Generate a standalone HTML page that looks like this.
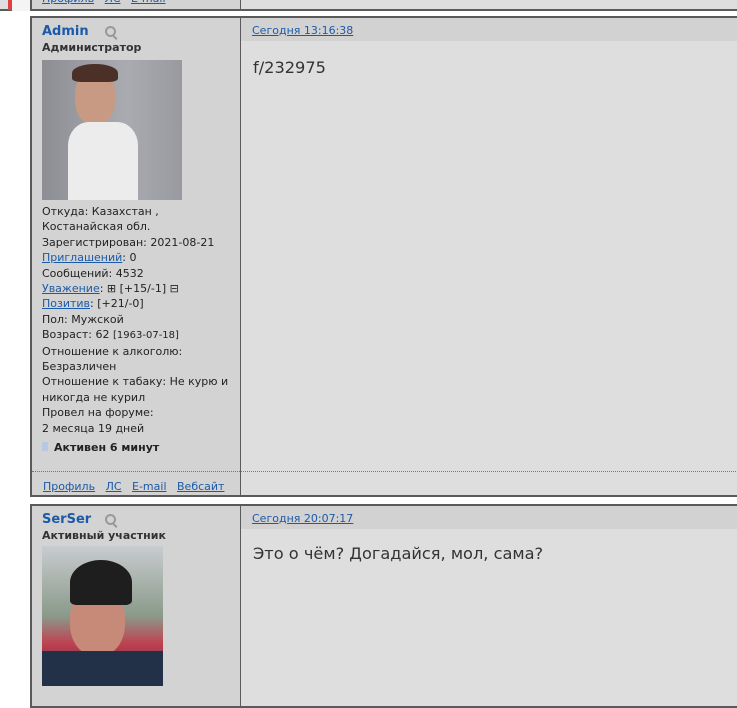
<!DOCTYPE html>
<html><head><meta charset="utf-8"><style>
body{margin:0;background:#fff;width:737px;height:696px;overflow:hidden;position:relative;font-family:"DejaVu Sans","Liberation Sans",sans-serif;font-size:11px;color:#222}
a{color:#1c5aa8;text-decoration:underline}
.post{position:absolute;left:30px;width:720px;border:2px solid #5a5a5a;border-right:none;background:#dedede}
.left{position:absolute;left:0;top:0;width:208px;bottom:0;background:#d3d3d3;border-right:1px solid #5a5a5a}
.hdr{position:absolute;left:209px;right:0;top:0;height:23px;background:#d2d2d2}
.hdr a{position:absolute;left:11px;top:6px;font-size:11px}
.name{position:absolute;left:10px;top:6px;font-weight:bold;font-size:13px;color:#1c5aa8}
.mag{position:absolute;left:73px;top:8px;width:7px;height:7px;border:2px solid #999;border-radius:50%}
.mag:after{content:"";position:absolute;left:7px;top:7px;width:2px;height:5px;background:#999;transform:rotate(-45deg)}
.title{position:absolute;left:10px;top:23px;font-weight:bold;font-size:11px;color:#333}
.info{position:absolute;left:10px;top:186px;line-height:15.4px;width:195px}
.msg{position:absolute;left:221px;font-size:16.2px;color:#333;font-family:"DejaVu Sans",sans-serif}
.foot a{margin-right:7px}
</style></head><body>
<div style="position:absolute;left:0;top:0;width:737px;height:9px;background:#dedede;border-bottom:2px solid #5a5a5a"></div>
<div style="position:absolute;left:30px;top:0;width:208px;height:9px;background:#d3d3d3;border-right:1px solid #5a5a5a;border-left:2px solid #5a5a5a"></div>
<div style="position:absolute;left:42px;top:-8px;font-size:11px"><a href="#">Профиль</a>&nbsp;&nbsp; <a href="#">ЛС</a>&nbsp;&nbsp; <a href="#">E-mail</a></div>
<div style="position:absolute;left:8px;top:0;width:4px;height:10px;background:#e04040"></div>
<div style="position:absolute;left:12px;top:0;width:18px;height:11px;background:#f4f4f4"></div>

<div class="post" style="top:16px;height:477px">
 <div class="left">
  <div class="name">Admin</div><div class="mag"></div>
  <div class="title">Администратор</div>
  <div style="position:absolute;left:10px;top:42px;width:140px;height:140px;background:linear-gradient(90deg,#8c8e94,#a9abb1 60%,#989aa0)">
   <div style="position:absolute;left:33px;top:10px;width:40px;height:55px;border-radius:45%;background:#c89a84"></div>
   <div style="position:absolute;left:30px;top:4px;width:46px;height:18px;border-radius:50% 50% 20% 20%;background:#4a3026"></div>
   <div style="position:absolute;left:26px;top:62px;width:70px;height:78px;border-radius:30% 30% 0 0;background:#ececec"></div>
  </div>
  <div class="info">Откуда: Казахстан ,<br>Костанайская обл.<br>Зарегистрирован: 2021-08-21<br><a href="#">Приглашений</a>: 0<br>Сообщений: 4532<br><a href="#">Уважение</a>: ⊞ [+15/-1] ⊟<br><a href="#">Позитив</a>: [+21/-0]<br>Пол: Мужской<br>Возраст: 62 <span style="font-size:10px">[1963-07-18]</span><br>Отношение к алкоголю:<br>Безразличен<br>Отношение к табаку: Не курю и никогда не курил<br>Провел на форуме:<br>2 месяца 19 дней<br><div style="margin-top:4px;font-weight:bold"><span style="display:inline-block;width:6px;height:9px;background:#b8c8e0;margin-right:6px"></span>Активен 6 минут</div></div>
 </div>
 <div class="hdr"><a href="#">Сегодня 13:16:38</a></div>
 <div class="msg" style="top:40px">f/232975</div>
 <div style="position:absolute;left:0;right:0;top:453px;border-top:1px dotted #777"></div>
 <div class="foot" style="position:absolute;left:11px;top:462px"><a href="#">Профиль</a> <a href="#">ЛС</a> <a href="#">E-mail</a> <a href="#">Вебсайт</a></div>
</div>

<div class="post" style="top:504px;height:200px">
 <div class="left">
  <div class="name">SerSer</div><div class="mag"></div>
  <div class="title">Активный участник</div>
  <div style="position:absolute;left:10px;top:40px;width:121px;height:140px;background:linear-gradient(180deg,#c8ccd0,#8a9a8a 50%,#c04050 70%,#2a3040)">
   <div style="position:absolute;left:28px;top:40px;width:55px;height:70px;border-radius:45%;background:#c88a78"></div>
   <div style="position:absolute;left:28px;top:14px;width:62px;height:45px;border-radius:50% 50% 10% 10%;background:#1e1e1e"></div>
   <div style="position:absolute;left:0;top:105px;width:121px;height:35px;background:#223048"></div>
  </div>
 </div>
 <div class="hdr"><a href="#">Сегодня 20:07:17</a></div>
 <div class="msg" style="top:38px">Это о чём? Догадайся, мол, сама?</div>
</div>
</body></html>
